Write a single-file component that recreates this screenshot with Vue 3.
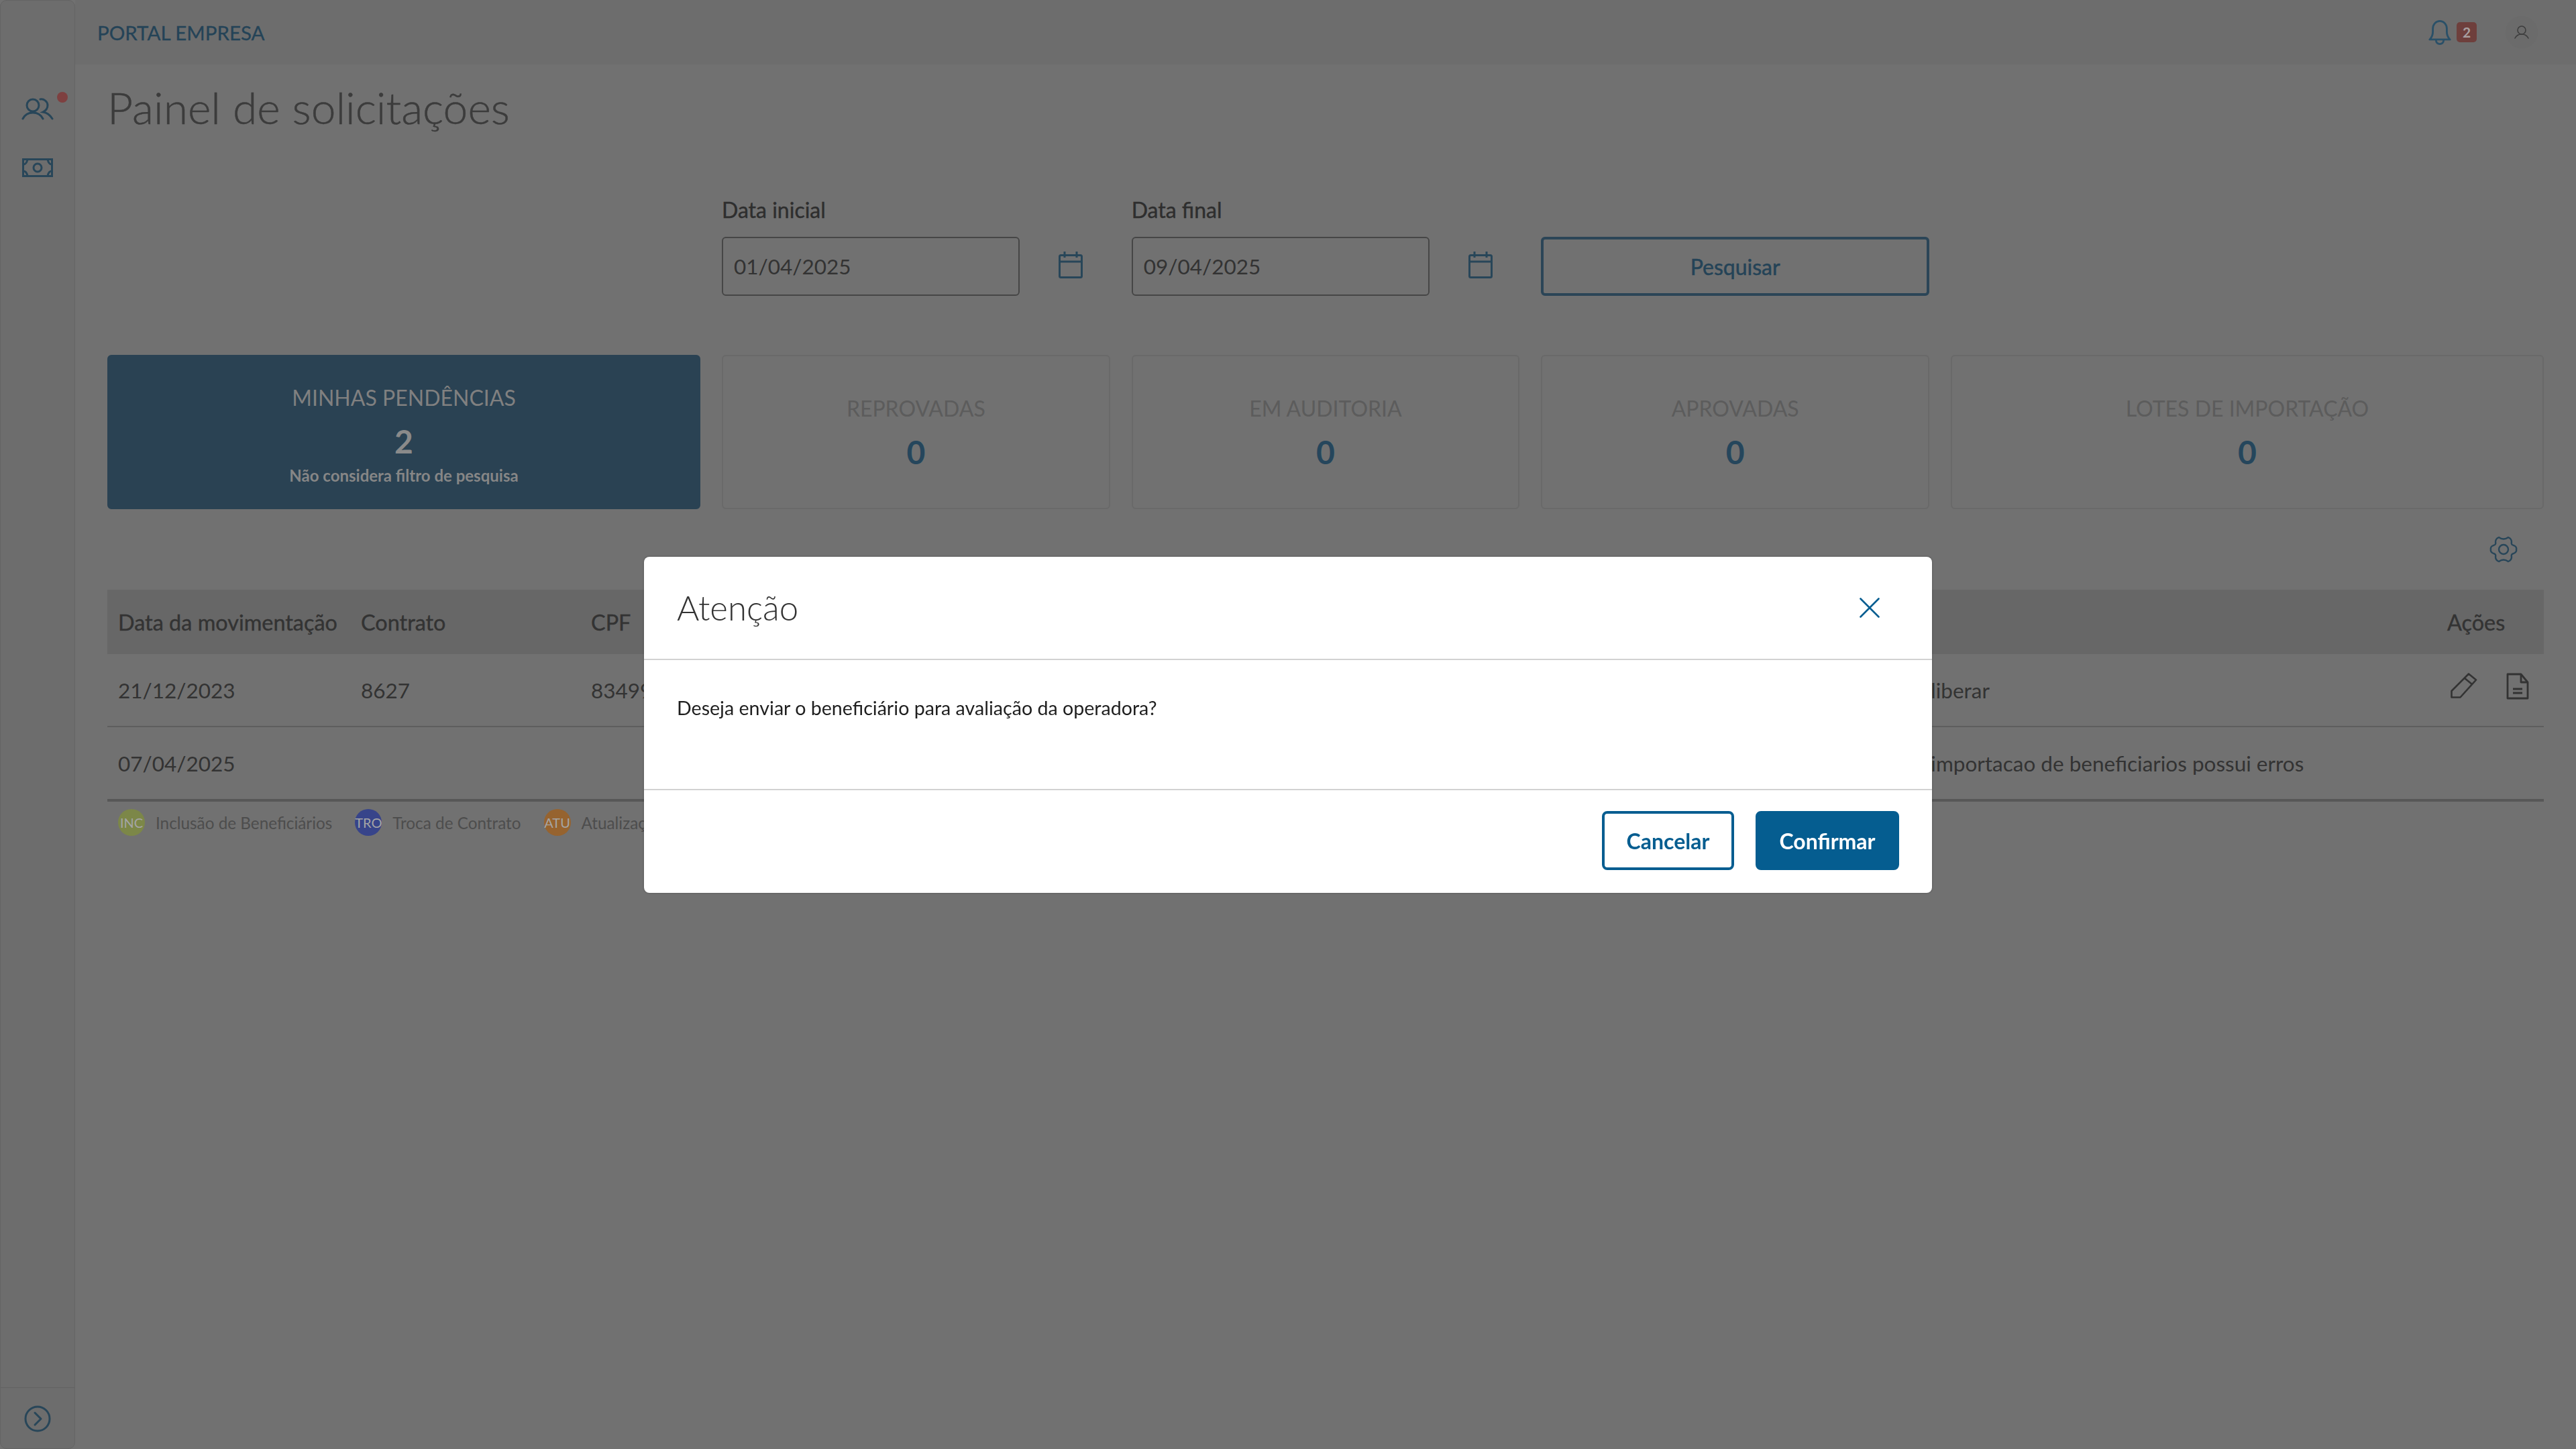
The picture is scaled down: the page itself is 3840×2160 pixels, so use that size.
<script setup>
const cards = [
  { label: 'REPROVADAS', value: 0, span: 2 },
  { label: 'EM AUDITORIA', value: 0, span: 2 },
  { label: 'APROVADAS', value: 0, span: 2 },
  { label: 'LOTES DE IMPORTAÇÃO', value: 0, span: 3 },
]

const legend = [
  { sigla: 'INC', text: 'Inclusão de Beneficiários', cls: 'inc' },
  { sigla: 'TRO', text: 'Troca de Contrato', cls: 'tro' },
  { sigla: 'ATU', text: 'Atualização Cadastral', cls: 'atu' },
]
</script>

<template>
  <div class="layout">
    <aside class="sidebar">
      <nav class="side-nav">
        <a class="side-item">
          <svg viewBox="0 0 48 34" width="48" height="34" fill="none" stroke="#284659" stroke-width="3" stroke-linecap="round">
            <circle cx="17" cy="11" r="9" />
            <path d="M2 31c3-6 9-9 15-9s12 3 15 9" />
            <path d="M28 2c5-1 11 3 11 9 0 5-3 8-7 10 6 1 11 5 14 10" />
          </svg>
          <span class="dot"></span>
        </a>
        <a class="side-item">
          <svg viewBox="0 0 46 28" width="46" height="28" fill="none" stroke="#284659" stroke-width="3">
            <rect x="1.5" y="1.5" width="43" height="25" />
            <circle cx="23" cy="14" r="6" />
            <path d="M2 9c3 0 5-3 6-7M44 9c-3 0-5-3-6-7M2 19c3 0 5 3 6 7M44 19c-3 0-5 3-6 7" />
          </svg>
        </a>
      </nav>
      <div class="side-foot">
        <svg viewBox="0 0 40 40" width="40" height="40" fill="none" stroke="#284659" stroke-width="3" stroke-linecap="round" stroke-linejoin="round">
          <circle cx="20" cy="20" r="18" />
          <path d="M16 11l9 9-9 9" />
        </svg>
      </div>
    </aside>

    <div class="content">
      <header class="topbar">
        <span class="brand">PORTAL EMPRESA</span>
        <div class="top-actions">
          <svg viewBox="0 0 38 40" width="36" height="39" fill="none" stroke="#2a5068" stroke-width="3" stroke-linejoin="round">
            <path d="M3 31c3-3 5-6 5-12V14C8 7 13 2 19 2s11 5 11 12v5c0 6 2 9 5 12z" />
            <path d="M13 32c0 4 3 6 6 6s6-2 6-6" />
          </svg>
          <span class="badge">2</span>
          <span class="avatar">
            <svg viewBox="0 0 22 20" width="22" height="20" fill="none" stroke="#3d3d3d" stroke-width="1.6" stroke-linecap="round">
              <circle cx="11" cy="7" r="6" />
              <path d="M1 19c2-4 6-6 10-6s8 2 10 6" />
            </svg>
          </span>
        </div>
      </header>

      <main class="main">
        <h1 class="title">Painel de solicitações</h1>

        <section class="filters">
          <div class="field">
            <label>Data inicial</label>
            <div class="date-row">
              <input class="date-input" value="01/04/2025" />
              <svg class="cal" viewBox="0 0 36 40" width="36" height="40" fill="none" stroke="#284659" stroke-width="3">
                <rect x="1.5" y="5.5" width="33" height="33" rx="2" />
                <path d="M1.5 15h33M9 0v9M27 0v9" />
              </svg>
            </div>
          </div>
          <div class="field">
            <label>Data final</label>
            <div class="date-row">
              <input class="date-input" value="09/04/2025" />
              <svg class="cal" viewBox="0 0 36 40" width="36" height="40" fill="none" stroke="#284659" stroke-width="3">
                <rect x="1.5" y="5.5" width="33" height="33" rx="2" />
                <path d="M1.5 15h33M9 0v9M27 0v9" />
              </svg>
            </div>
          </div>
          <button class="btn-search">Pesquisar</button>
        </section>

        <section class="cards">
          <div class="card card-main">
            <span class="card-label">MINHAS PENDÊNCIAS</span>
            <strong class="card-value">2</strong>
            <small>Não considera filtro de pesquisa</small>
          </div>
          <div
            v-for="c in cards"
            :key="c.label"
            class="card"
            :class="c.span === 3 ? 'span3' : 'span2'"
          >
            <span class="card-label">{{ c.label }}</span>
            <strong class="card-value">{{ c.value }}</strong>
          </div>
        </section>

        <div class="tools">
          <svg viewBox="0 0 42 40" width="42" height="40" fill="none" stroke="#284659" stroke-width="2.4" stroke-linejoin="round">
            <path d="M14 2Q21 7 28 2Q33 4 33 9Q32 13 36 14Q41 16 40 20Q41 24 36 26Q32 27 33 31Q33 36 28 38Q21 33 14 38Q9 36 9 31Q10 27 6 26Q1 24 2 20Q1 16 6 14Q10 13 9 9Q9 4 14 2Z" />
            <circle cx="21" cy="20" r="7" />
          </svg>
        </div>

        <table class="grid">
          <colgroup>
            <col style="width: 362px" />
            <col style="width: 343px" />
            <col style="width: 800px" />
            <col style="width: 1169px" />
            <col style="width: 798px" />
            <col style="width: 160px" />
          </colgroup>
          <thead>
            <tr>
              <th>Data da movimentação</th>
              <th>Contrato</th>
              <th>CPF</th>
              <th></th>
              <th></th>
              <th>Ações</th>
            </tr>
          </thead>
          <tbody>
            <tr>
              <td>21/12/2023</td>
              <td>8627</td>
              <td>83499</td>
              <td></td>
              <td>A liberar</td>
              <td>
                <div class="row-actions">
                  <svg viewBox="0 0 40 38" width="40" height="38" fill="none" stroke="#333" stroke-width="2.6" stroke-linejoin="round">
                    <path d="M27 1.5L38 10.5 14.5 36.5H1.5V27Z" />
                    <path d="M21 8l11 9" />
                  </svg>
                  <svg viewBox="0 0 34 40" width="34" height="40" fill="none" stroke="#333" stroke-width="2.8" stroke-linejoin="round">
                    <path d="M2 2h20l10 12v24H2z" />
                    <path d="M22 2v12h10M10 24h14M10 30h14" />
                  </svg>
                </div>
              </td>
            </tr>
            <tr>
              <td>07/04/2025</td>
              <td></td>
              <td></td>
              <td></td>
              <td>A importacao de beneficiarios possui erros</td>
              <td></td>
            </tr>
          </tbody>
        </table>

        <ul class="legend">
          <li v-for="l in legend" :key="l.sigla">
            <span class="sigla" :class="l.cls">{{ l.sigla }}</span>
            {{ l.text }}
          </li>
        </ul>
      </main>
    </div>

    <div class="backdrop">
      <div class="modal">
        <div class="modal-head">
          <h2>Atenção</h2>
          <svg viewBox="0 0 30 30" width="30" height="30" fill="none" stroke="#055d90" stroke-width="2.6" stroke-linecap="round">
            <path d="M1.5 1.5l27 27M28.5 1.5l-27 27" />
          </svg>
        </div>
        <div class="modal-body">Deseja enviar o beneficiário para avaliação da operadora?</div>
        <div class="modal-foot">
          <button class="btn outline">Cancelar</button>
          <button class="btn solid">Confirmar</button>
        </div>
      </div>
    </div>
  </div>
</template>

<style>
html, body {
  margin: 0;
  background: #717171;
}
</style>

<style scoped>
.layout {
  display: flex;
  width: 3840px;
  height: 2160px;
  overflow: hidden;
  background: #717171;
  font-family: Lato, "Noto Sans", sans-serif;
  color: #333;
}

/* Menu lateral */
.sidebar {
  width: 112px;
  box-sizing: border-box;
  display: flex;
  flex-direction: column;
  justify-content: space-between;
  background: #6d6d6d;
  border: 1px solid #646464;
  border-radius: 10px;
}

.side-nav {
  display: flex;
  flex-direction: column;
  align-items: center;
  padding-top: 145px;
  gap: 56px;
}

.side-item {
  position: relative;
  display: flex;
}

.dot {
  position: absolute;
  top: -9px;
  right: -21px;
  width: 16px;
  height: 16px;
  border-radius: 50%;
  background: #7e4040;
}

.side-foot {
  height: 88px;
  display: flex;
  align-items: center;
  justify-content: center;
  border-top: 1px solid #626262;
  padding-top: 2px;
}

/* Barra superior */
.content {
  flex: 1;
  min-width: 0;
}

.topbar {
  height: 96px;
  display: flex;
  align-items: center;
  justify-content: space-between;
  padding: 0 57px 0 33px;
  background: #6d6d6d;
}

.brand {
  font-size: 29.5px;
  color: #244357;
  -webkit-text-stroke: 0.3px #244357;
}

.top-actions {
  display: flex;
  align-items: center;
}

.badge {
  width: 30px;
  height: 30px;
  margin-left: 7px;
  border-radius: 5px;
  background: #6e3f3c;
  color: #a8a0a0;
  font-size: 21px;
  font-weight: 700;
  text-align: center;
  line-height: 30px;
}

.avatar {
  width: 48px;
  height: 48px;
  margin-left: 43px;
  border-radius: 50%;
  background: #6b6b6b;
  display: flex;
  align-items: center;
  justify-content: center;
}

/* Conteudo */
.main {
  padding: 0 48px;
}

.title {
  margin: 24px 0 0;
  font-size: 66px;
  line-height: 80px;
  font-weight: 300;
  color: #3c3c3c;
  -webkit-text-stroke: 0.5px #3c3c3c;
}

.filters,
.cards {
  display: grid;
  grid-template-columns: repeat(12, 1fr);
  column-gap: 32px;
}

.filters {
  margin-top: 93px;
  align-items: end;
}

.field {
  grid-column: span 2;
}

.field:first-child {
  grid-column: 4 / span 2;
}

.field label {
  display: block;
  font-size: 32px;
  line-height: 40px;
  color: #2e2e2e;
  -webkit-text-stroke: 0.4px #2e2e2e;
  margin-bottom: 20px;
}

.date-row {
  display: flex;
  align-items: center;
  gap: 58px;
}

.date-input {
  width: 444px;
  height: 88px;
  box-sizing: border-box;
  padding: 0 16px;
  background: transparent;
  border: 2px solid #464646;
  border-radius: 6px;
  font: 400 31.5px Lato, "Noto Sans", sans-serif;
  color: #333;
  outline: none;
}

.cal {
  flex: none;
  margin-top: -4px;
}

.btn-search {
  grid-column: span 2;
  height: 88px;
  background: transparent;
  border: 4px solid #2b4557;
  border-radius: 6px;
  font: 400 32px Lato, "Noto Sans", sans-serif;
  color: #244357;
  -webkit-text-stroke: 0.5px #244357;
}

.cards {
  margin-top: 88px;
}

.card {
  height: 230px;
  box-sizing: border-box;
  display: flex;
  flex-direction: column;
  align-items: center;
  justify-content: center;
  padding-top: 4px;
  background: #717171;
  border: 2px solid #696969;
  border-radius: 6px;
}

.span2 {
  grid-column: span 2;
}

.span3 {
  grid-column: span 3;
}

.card-label {
  font-size: 32px;
  line-height: 40px;
  font-weight: 400;
  color: #5c5c5c;
}

.card-value {
  margin-top: 15px;
  font-size: 48px;
  line-height: 60px;
  font-weight: 700;
  color: #25465c;
}

.card-main {
  grid-column: span 3;
  background: #2a4253;
  border-color: #2a4253;
  padding-top: 8px;
}

.card-main .card-label {
  color: #808080;
}

.card-main .card-value {
  color: #8a8a8a;
}

.card-main small {
  margin-top: 6px;
  font-size: 24px;
  line-height: 30px;
  font-weight: 700;
  color: #868686;
}

.tools {
  height: 120px;
  display: flex;
  align-items: center;
  justify-content: flex-end;
  padding-right: 39px;
  box-sizing: border-box;
}

/* Tabela */
.grid {
  width: 100%;
  table-layout: fixed;
  border-collapse: collapse;
  font-size: 31.5px;
  color: #333;
}

.grid th {
  height: 96px;
  padding: 0 16px;
  text-align: left;
  font-size: 32.4px;
  font-weight: 400;
  -webkit-text-stroke: 0.4px #333;
  background: #676767;
  white-space: nowrap;
}

.grid td {
  height: 107px;
  padding: 0 16px;
  border-bottom: 2px solid #5e5e5e;
  white-space: nowrap;
}

.grid tbody tr:last-child td {
  border-bottom: 4px solid #575757;
}

.row-actions {
  display: flex;
  gap: 43px;
  margin: -12px 0 0 5px;
}

.legend {
  display: flex;
  gap: 34px;
  margin: 11px 0 0;
  padding: 0 16px;
  list-style: none;
  font-size: 24.3px;
  color: #4d4d4d;
}

.legend li {
  display: flex;
  align-items: center;
  gap: 16px;
  white-space: nowrap;
}

.sigla {
  width: 40px;
  height: 40px;
  border-radius: 50%;
  display: flex;
  align-items: center;
  justify-content: center;
  font-size: 20px;
  color: #a5a5a5;
}

.inc {
  background: #7c8748;
}

.tro {
  background: #37448a;
}

.atu {
  background: #96632f;
}

/* Modal */
.backdrop {
  position: fixed;
  inset: 0;
  display: flex;
  align-items: center;
  justify-content: center;
}

.modal {
  width: 1920px;
  height: 501px;
  display: flex;
  flex-direction: column;
  background: #fff;
  border-radius: 8px;
  box-shadow: 0 0 3px rgba(0, 0, 0, 0.3);
  color: #1f1f1f;
}

.modal-head {
  height: 154px;
  flex: none;
  box-sizing: border-box;
  display: flex;
  align-items: center;
  justify-content: space-between;
  padding: 0 78px 0 49px;
  border-bottom: 2px solid #d2d2d2;
}

.modal-head h2 {
  margin: 0;
  font-size: 51px;
  font-weight: 300;
  color: #333;
}

.modal-body {
  flex: 1;
  box-sizing: border-box;
  padding: 53px 49px 0;
  font-size: 28.6px;
  line-height: 36px;
}

.modal-foot {
  height: 155px;
  flex: none;
  box-sizing: border-box;
  display: flex;
  align-items: center;
  justify-content: flex-end;
  gap: 32px;
  padding: 2px 49px 4px;
  border-top: 2px solid #d2d2d2;
}

.btn {
  height: 88px;
  border-radius: 8px;
  font: 700 32px Lato, "Noto Sans", sans-serif;
}

.outline {
  width: 197px;
  background: #fff;
  border: 4px solid #055d90;
  color: #055d90;
}

.solid {
  width: 214px;
  background: #055d90;
  border: 4px solid #055d90;
  color: #fff;
}
</style>
